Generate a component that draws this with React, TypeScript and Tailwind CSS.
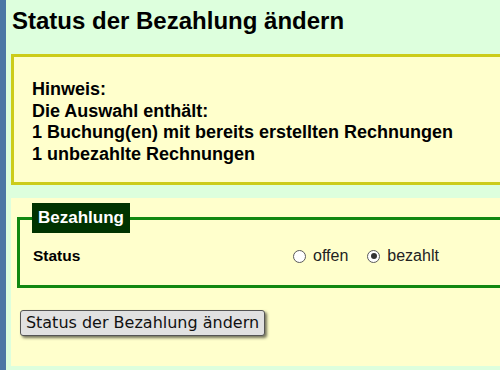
import React from "react";

function Radio({ checked }: { checked?: boolean }) {
  return (
    <span className="relative inline-block w-[13px] h-[13px] rounded-full border border-[#5a5a5a] bg-white shrink-0">
      {checked && (
        <span className="absolute left-[2.5px] top-[2.5px] w-[6px] h-[6px] rounded-full bg-[#333333]" />
      )}
    </span>
  );
}

export default function App() {
  return (
    <div
      className="flex w-[500px] h-[370px] overflow-hidden bg-[#ddffdd]"
      style={{ fontFamily: '"Liberation Sans", Arial, sans-serif' }}
    >
      <div className="w-[6px] shrink-0 bg-[#4b78a5]" />
      <div className="flex flex-col w-[560px] shrink-0">
        <h1 className="pl-[6px] pt-[7px] mb-[19px] text-[24px] leading-[28px] font-bold text-black">
          Status der Bezahlung ändern
        </h1>
        <div className="ml-[5px] border-[3px] border-[#cccc1a] bg-[#ffffcc] pl-[18px] pt-[22px] pb-[17px] text-[18px] leading-[21.5px] font-bold text-black">
          <div>Hinweis:</div>
          <div>Die Auswahl enthält:</div>
          <div>1 Buchung(en) mit bereits erstellten Rechnungen</div>
          <div>1 unbezahlte Rechnungen</div>
        </div>
        <div className="ml-[5px] mt-[13px] h-[168px] bg-[#ffffcc] pt-[5px]">
          <fieldset className="ml-[6px] border-[3px] border-[#118811] px-[13px] pt-[12px] pb-[18px] m-0">
            <legend className="ml-[-1px] bg-[#003300] px-[6px] h-[30px] text-[17px] leading-[30px] font-bold text-white">
              Bezahlung
            </legend>
            <div className="flex items-center h-[22px]">
              <div className="w-[260px] text-[15.5px] font-bold text-black">Status</div>
              <label className="flex items-center gap-[7px] text-[16px] text-[#222222]">
                <Radio />
                <span>offen</span>
              </label>
              <label className="ml-[19px] flex items-center gap-[7px] text-[16px] text-[#222222]">
                <Radio checked />
                <span>bezahlt</span>
              </label>
            </div>
          </fieldset>
          <button
            className="ml-[9px] mt-[22px] h-[26px] w-[245px] rounded-[3px] border border-[#555555] bg-[#e1e1e1] text-[16px] text-[#111111] shadow-[2px_2px_3px_rgba(0,0,0,0.55)]"
            style={{ fontFamily: '"DejaVu Sans", Verdana, sans-serif' }}
          >
            Status der Bezahlung ändern
          </button>
        </div>
      </div>
    </div>
  );
}
